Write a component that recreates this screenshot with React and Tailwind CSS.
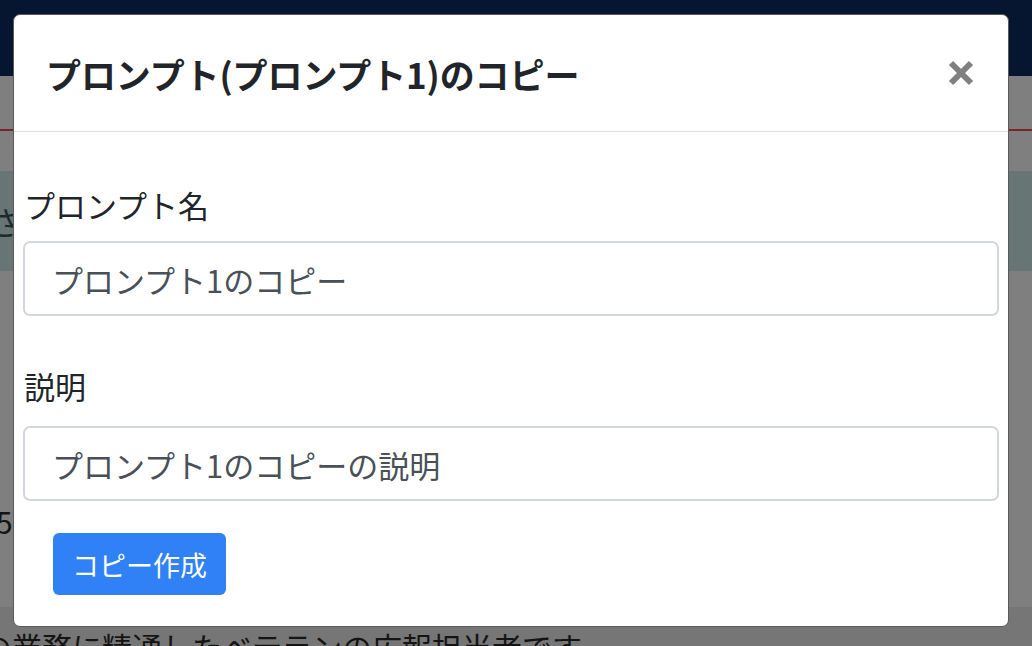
import React from "react";

const jp = { fontFamily: '"Noto Sans CJK JP", "Noto Sans", sans-serif' };

function CloseIcon() {
  return (
    <svg width="28" height="26" viewBox="0 0 28 26">
      <path d="M4 3 L24 23 M24 3 L4 23" stroke="#808080" strokeWidth="6" strokeLinecap="butt" />
    </svg>
  );
}

export default function App() {
  return (
    <div className="relative w-[1032px] h-[646px] overflow-hidden bg-[#7f7f7f]" style={jp}>
      {/* page behind the overlay */}
      <div className="flex flex-col">
        <div className="h-[76px] bg-[#061530]" />
        <div className="h-[53px]" />
        <div className="h-[2px] bg-[#7a2424]" />
        <div className="h-[40px]" />
        <div className="h-[100px] bg-[#687575] flex items-center">
          <span className="ml-[-12px] text-[32px] text-[#1c2a2b] leading-none">さ</span>
        </div>
        <div className="h-[230px]" />
        <div className="h-[40px] flex items-center">
          <span className="ml-[-4px] text-[30px] text-[#141414] leading-none">5</span>
        </div>
        <div className="h-[66px]" />
        <div className="h-[40px] bg-[#767676] flex items-end">
          <span className="ml-[-18px] mb-[-14px] text-[30px] text-[#141414] leading-none whitespace-nowrap">
            の業務に精通したベテランの広報担当者です。
          </span>
        </div>
      </div>

      {/* modal */}
      <div className="absolute left-[13px] top-[14px] w-[996px] h-[613px] bg-white rounded-[7px] border border-[#5a5a5a] flex flex-col">
        <div className="h-[117px] shrink-0 flex items-center justify-between pl-[32px] pr-[33px] border-b border-[#dee2e6]">
          <h5 className="text-[35px] font-bold text-[#212529] leading-none tracking-[-0.1px]">
            プロンプト(プロンプト1)のコピー
          </h5>
          <CloseIcon />
        </div>
        <div className="flex flex-col px-[9px] pt-[51px]">
          <label className="pl-[1px] text-[31px] leading-[44px] text-[#212529] mb-[14px]">プロンプト名</label>
          <div className="h-[75px] border-2 border-[#d3d7dc] rounded-[7px] flex items-center pl-[27px] pt-[3px] text-[31px] text-[#495057]">
            プロンプト1のコピー
          </div>
          <label className="pl-[1px] mt-[48px] text-[31px] leading-[44px] text-[#212529] mb-[18px]">説明</label>
          <div className="h-[75px] border-2 border-[#d3d7dc] rounded-[7px] flex items-center pl-[27px] pt-[3px] text-[31px] text-[#495057]">
            プロンプト1のコピーの説明
          </div>
          <div className="mt-[32px] pl-[30px]">
            <button className="w-[173px] h-[62px] bg-[#3081f6] rounded-[6px] text-white text-[27px] leading-none">
              コピー作成
            </button>
          </div>
        </div>
      </div>
    </div>
  );
}
